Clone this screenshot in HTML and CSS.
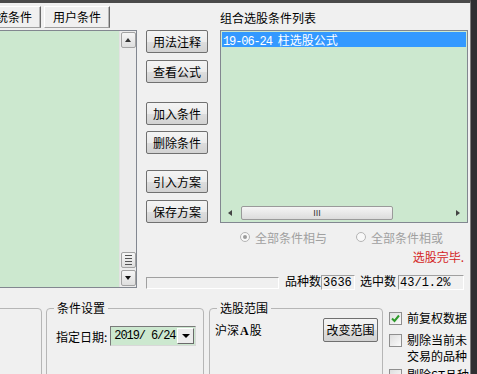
FILE: index.html
```html
<!DOCTYPE html>
<html lang="zh">
<head>
	<meta charset="UTF-8">
	<title>条件选股</title>
	<link rel="stylesheet" href="styles.css">
</head>
<body>
	<div class="win">
		<div class="top">
			<div class="left">
				<div class="tabs">
					<div class="tab tab-cut">系统条件</div>
					<div class="tab">用户条件</div>
				</div>
				<div class="cond-list">
					<div class="green"></div>
					<div class="vscroll">
						<div class="sbtn"><span class="tri-up"></span></div>
						<div class="track"></div>
						<div class="sbtn grip"><i></i><i></i><i></i><i></i></div>
						<div class="sbtn down"><span class="tri-down"></span></div>
					</div>
				</div>
			</div>
			<div class="main">
				<div class="upper">
					<div class="btns">
						<div class="btn">用法注释</div>
						<div class="btn gap-s">查看公式</div>
						<div class="btn gap-l">加入条件</div>
						<div class="btn gap-s">删除条件</div>
						<div class="btn gap-m">引入方案</div>
						<div class="btn gap-s">保存方案</div>
					</div>
					<div class="right">
						<div class="cap">组合选股条件列表</div>
						<div class="clist">
							<div class="row sel"><span class="mono">19-06-24</span><span class="name">柱选股公式</span></div>
							<div class="hscroll">
								<span class="tri-left"></span>
								<div class="hthumb">III</div>
								<span class="tri-right"></span>
							</div>
						</div>
						<div class="radios">
							<span class="radio on"></span><span class="rtext">全部条件相与</span>
							<span class="radio r2"></span><span class="rtext">全部条件相或</span>
						</div>
						<div class="done">选股完毕.</div>
					</div>
				</div>
				<div class="stat">
					<div class="prog"></div>
					<span class="lbl">品种数</span>
					<div class="val v1">3636</div>
					<span class="lbl l2">选中数</span>
					<div class="val v2">43/1.2%</div>
				</div>
			</div>
		</div>
		<div class="bottom">
			<fieldset class="fs fs1">
				<legend>&nbsp;</legend>
			</fieldset>
			<fieldset class="fs fs2">
				<legend>条件设置</legend>
				<div class="date-row">
					<span>指定日期:</span>
					<div class="combo">
						<span class="mono">2019/ 6/24</span>
						<div class="cbtn"><span class="tri-down"></span></div>
					</div>
				</div>
			</fieldset>
			<fieldset class="fs fs3">
				<legend>选股范围</legend>
				<div class="range-row">
					<span>沪深<b>A</b>股</span>
					<div class="btn rbtn">改变范围</div>
				</div>
			</fieldset>
			<div class="checks">
				<div class="chk">
					<span class="box"><svg width="11" height="11" viewBox="0 0 11 11"><path d="M2 5.5 L4.5 8 L9 2.5" fill="none" stroke="#2e9a2a" stroke-width="2"/></svg></span>
					<span>前复权数据</span>
				</div>
				<div class="chk c2">
					<span class="box"></span>
					<span>剔除当前未交易的品种</span>
				</div>
				<div class="chk c3">
					<span class="box"></span>
					<span>剔除ST品种</span>
				</div>
			</div>
		</div>
	</div>
</body>
</html>
```

FILE: styles.css
```css
*{
	box-sizing:border-box;
}
html,body{
	margin:0;
}
body{
	width:477px;
	height:374px;
	overflow:hidden;
	background:#2f3033;
	font-family:"Noto Sans CJK SC",sans-serif;
	font-size:12px;
	color:#000;
}
.win{
	width:471px;
	height:374px;
	background:#f0f0f0;
	border-top:3px solid #4a4a4a;
	border-right:1px solid #7d7d7d;
	overflow:hidden;
}
.mono{
	font-family:"Liberation Mono",monospace;
	font-size:12px;
	letter-spacing:-1.1px;
}
.top{
	display:flex;
	height:286px;
}
.left{
	width:137px;
}
.tabs{
	display:flex;
	margin-top:3px;
	height:22px;
}
.tab{
	width:66px;
	height:22px;
	line-height:20px;
	text-align:center;
	background:#f0f0f0;
	border:1px solid;
	border-color:#fff #6a6a6a #a0a0a0 #fff;
	box-shadow:inset -1px 0 0 #b8b8b8;
	margin-left:3px;
}
.tab-cut{
	margin-left:-25px;
}
.cond-list{
	display:flex;
	height:258px;
	margin-top:2px;
	border:1px solid #828790;
	border-left:none;
}
.green{
	flex:1;
	background:#cce8cf;
}
.vscroll{
	width:17px;
	display:flex;
	flex-direction:column;
	align-items:center;
	background:#ececec;
	border-left:1px solid #e2e2e2;
}
.sbtn{
	width:15px;
	height:16px;
	margin-top:1px;
	border:1px solid #a3a3a3;
	border-radius:2px;
	background:linear-gradient(#f6f6f6,#dedede);
	display:flex;
	align-items:center;
	justify-content:center;
}
.track{
	flex:1;
}
.grip{
	flex-direction:column;
	gap:2px;
	margin-bottom:2px;
}
.grip i{
	display:block;
	width:7px;
	height:1px;
	background:#555;
}
.sbtn.down{
	margin:0 0 1px;
}
.tri-up,.tri-down,.tri-left,.tri-right{
	width:0;
	height:0;
	border:3px solid transparent;
}
.tri-up{
	border-bottom:4px solid #333;
	border-top:none;
}
.tri-down{
	border-top:4px solid #111;
	border-bottom:none;
}
.tri-left{
	border-right:4px solid #444;
	border-left:none;
}
.tri-right{
	border-left:4px solid #444;
	border-right:none;
}
.main{
	margin-left:9px;
	width:322px;
	display:flex;
	flex-direction:column;
}
.upper{
	display:flex;
	height:268px;
}
.btns{
	width:62px;
	padding-top:27px;
	display:flex;
	flex-direction:column;
}
.btn{
	height:23px;
	line-height:21px;
	text-align:center;
	border:1px solid #707070;
	border-radius:2px;
	background:linear-gradient(#f4f4f4,#ececec 50%,#dedede 51%,#d2d2d2);
}
.gap-s{
	margin-top:7px;
}
.gap-m{
	margin-top:16px;
}
.gap-l{
	margin-top:19px;
}
.btns .btn:nth-child(4){
	margin-top:6px;
}
.right{
	margin-left:12px;
	width:248px;
	display:flex;
	flex-direction:column;
}
.cap{
	height:27px;
	padding-top:5px;
	line-height:20px;
}
.clist{
	height:193px;
	border:1px solid #828790;
	background:#cce8cf;
	padding:1px;
	display:flex;
	flex-direction:column;
}
.row{
	height:15px;
	line-height:15px;
	padding-left:1px;
}
.sel{
	background:#3399ff;
	color:#fff;
}
.name{
	margin-left:6px;
}
.hscroll{
	margin-top:auto;
	height:16px;
	display:flex;
	align-items:center;
	padding:0 6px;
}
.hthumb{
	margin-left:9px;
	width:152px;
	height:14px;
	border:1px solid #9a9a9a;
	border-radius:2px;
	background:linear-gradient(#f5f5f5,#dcdcdc);
	text-align:center;
	font-family:"Liberation Sans",sans-serif;
	font-size:9px;
	line-height:12px;
	color:#333;
}
.tri-right{
	margin-left:auto;
}
.radios{
	display:flex;
	align-items:center;
	height:14px;
	margin-top:7px;
	padding-left:20px;
	color:#a0a0a0;
}
.radio{
	width:10px;
	height:10px;
	border:1px solid #b4b4b4;
	border-radius:50%;
	background:#f8f8f8;
	display:flex;
	align-items:center;
	justify-content:center;
}
.radio.on:after{
	content:'';
	width:4px;
	height:4px;
	border-radius:50%;
	background:#9c9c9c;
}
.rtext{
	margin-left:5px;
}
.r2{
	margin-left:29px;
}
.done{
	margin-top:6px;
	line-height:14px;
	text-align:right;
	padding-right:4px;
	color:#d42424;
}
.stat{
	display:flex;
	align-items:center;
	height:16px;
	margin-top:2px;
}
.prog{
	width:133px;
	height:12px;
	margin-top:4px;
	border:1px solid;
	border-color:#a0a0a0 #fff #fff #a0a0a0;
}
.lbl{
	margin-left:6px;
	line-height:16px;
}
.l2{
	margin-left:5px;
}
.val{
	height:15px;
	margin-top:2px;
	border:1px solid;
	border-color:#a0a0a0 #fff #fff #a0a0a0;
	font-family:"Liberation Mono",monospace;
	font-size:12px;
	line-height:14px;
	padding-left:1px;
}
.v1{
	width:34px;
}
.v2{
	width:66px;
	margin-left:2px;
}
.bottom{
	display:flex;
	align-items:flex-start;
	padding-top:11px;
}
.fs{
	margin:0;
	padding:0;
	height:100px;
	border:1px solid #b6b6b6;
	border-radius:4px;
}
.fs legend{
	margin-left:7px;
	padding:0 3px;
	line-height:16px;
}
.fs1{
	width:142px;
	margin-left:-100px;
}
.fs1 legend{
	visibility:hidden;
}
.fs2{
	width:158px;
	margin-left:4px;
}
.fs3{
	width:174px;
	margin-left:5px;
}
.date-row{
	display:flex;
	align-items:center;
	margin-top:10px;
	padding-left:9px;
}
.combo{
	margin-left:3px;
	width:86px;
	height:20px;
	border:1px solid;
	border-color:#7a7a7a #d8d8d8 #d8d8d8 #7a7a7a;
	background:#cce8cf;
	display:flex;
	align-items:center;
	padding-left:3px;
}
.cbtn{
	margin-left:auto;
	margin-right:1px;
	width:17px;
	height:16px;
	border:1px solid;
	border-color:#fff #6a6a6a #6a6a6a #fff;
	background:#ececec;
	display:flex;
	align-items:center;
	justify-content:center;
}
.cbtn .tri-down{
	border-width:4px 4px 0;
	border-top-color:#000;
}
.range-row{
	display:flex;
	align-items:center;
	justify-content:space-between;
	padding:2px 4px 0 5px;
}
.range-row b{
	font-family:"Liberation Serif",serif;
	margin:0 1px;
}
.rbtn{
	width:55px;
	height:24px;
	line-height:22px;
}
.checks{
	margin-left:5px;
	margin-top:10px;
	width:82px;
}
.chk{
	display:flex;
	align-items:flex-start;
	line-height:16px;
}
.c2{
	margin-top:6px;
}
.c3{
	margin-top:3px;
}
.box{
	flex:none;
	width:13px;
	height:13px;
	margin:2px 5px 0 1px;
	border:1px solid #8f8f8f;
	background:linear-gradient(135deg,#dedede,#fbfbfb);
	display:flex;
	align-items:center;
	justify-content:center;
}
```
